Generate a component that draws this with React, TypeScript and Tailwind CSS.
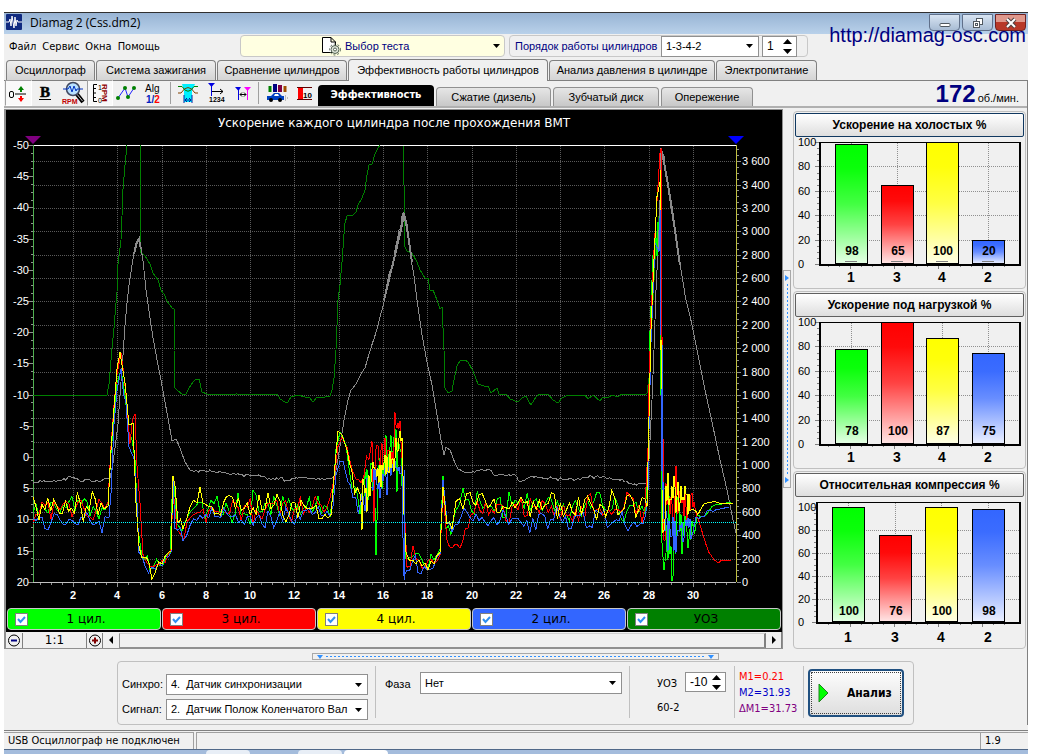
import { useState } from 'react';
import type { ReactNode } from 'react';
import clsx from 'clsx';

type Anchor = [x: number, y: number, amp: number];

type BarData = {
  label: string;
  value: number;
  fill: string;
};

type Series = {
  name: string;
  className: string;
};

const GREEN = '#00ff00';
const RED = '#ff0000';
const YELLOW = '#ffff00';
const BLUE = '#3366ff';

const modeTabs = [
  { title: 'Осциллограф', width: 'w-[89px]' },
  { title: 'Система зажигания', width: 'w-[120px]' },
  { title: 'Сравнение цилиндров', width: 'w-[130px]' },
  { title: 'Эффективность работы цилиндров', width: 'w-[200px]' },
  { title: 'Анализ давления в цилиндре', width: 'w-[166px]' },
  { title: 'Электропитание', width: 'w-[101px]' },
];

const viewTabs = [
  { title: 'Эффективность', width: 'w-[116px]' },
  { title: 'Сжатие (дизель)', width: 'w-[115px]' },
  { title: 'Зубчатый диск', width: 'w-[106px]' },
  { title: 'Опережение', width: 'w-[92px]' },
];

const series: Series[] = [
  { name: '1 цил.', className: 'bg-[#00ff00]' },
  { name: '3 цил.', className: 'bg-[#ff0000]' },
  { name: '4 цил.', className: 'bg-[#ffff00]' },
  { name: '2 цил.', className: 'bg-[#3366ff]' },
  { name: 'УОЗ', className: 'bg-[#008000]' },
];

// Ignition advance
const advanceLine =
  '33,395 107,395 109,384 111,360 112,348 114,328 116,303 117,292 118,264 119,256 121,240 122,216 123,189 125,165 127,145';
const advanceLine2 =
  '140,145 140,252 145,256 150,264 153,273 158,280 161,290 164,294 167,301 172,308 174,309 174,350 175,388 178,391 182,394 186,394 189,388 193,382 196,379 199,379 202,392 207,394 220,395 236,394 270,395 277,394 280,399 285,402 288,402 291,397 298,395 305,397 309,397 313,402 317,397 325,397 330,396 332,390 334,378 336,350 337,326 338,300 340,285 342,262 344,234 345,223 347,216 353,215 356,212 358,205 362,198 365,190 367,175 369,165 372,164 375,154 378,148 380,145';
const advanceLine3 =
  '403,145 404,185 405,247 407,251 412,253 417,262 420,270 425,278 428,278 430,290 433,290 437,300 440,309 442,307 443,328 444,350 445,388 448,393 452,391 454,380 457,366 460,361 465,360 468,362 473,371 478,384 484,386 488,386 491,393 497,388 499,394 507,395 510,399 518,402 522,398 526,396 529,402 531,405 536,397 540,394 548,394 553,400 558,403 562,398 568,395 585,395 588,399 593,395 600,401 603,397 608,398 612,395 618,397 622,394 645,395 647,393 649,378 651,340 654,280 656,240 659,216';

// Crankshaft speed
const speedAnchors: Anchor[] = [
  [33, 483, 1], [40, 481, 1], [62, 481, 1], [70, 477, 1], [77, 480, 1], [100, 482, 1], [104, 479, 0],
  [110, 478, 0], [113, 463, 0], [116, 440, 0], [118, 424, 0], [120, 395, 0], [123, 355, 0], [125, 325, 0],
  [127, 303, 0], [129, 285, 0], [132, 265, 0], [134, 250, 3], [137, 240, 3], [139, 238, 2], [141, 249, 3],
  [143, 262, 2], [146, 290, 0], [150, 318, 0], [153, 338, 0], [158, 365, 0], [161, 380, 0], [164, 397, 0],
  [168, 418, 0], [172, 441, 0], [176, 439, 0], [180, 448, 0], [185, 462, 0], [190, 470, 0], [195, 472, 1],
  [202, 470, 1], [230, 474, 1], [262, 476, 1], [269, 478, 1], [292, 480, 1], [298, 477, 1], [322, 479, 1],
  [332, 478, 0], [335, 475, 0], [337, 465, 0], [341, 440, 0], [344, 420, 0], [348, 400, 0], [351, 390, 0],
  [356, 383, 1], [361, 374, 1], [365, 368, 0], [369, 354, 0], [376, 332, 1], [380, 318, 2], [384, 298, 3],
  [388, 282, 3], [393, 263, 4], [399, 235, 5], [404, 212, 3], [407, 228, 3], [412, 262, 2], [417, 300, 1],
  [422, 335, 0], [427, 362, 0], [432, 385, 0], [437, 415, 0], [441, 440, 0], [444, 455, 0], [446, 447, 0],
  [450, 450, 0], [455, 463, 0], [458, 469, 0], [467, 473, 1], [480, 470, 1], [488, 470, 1], [495, 475, 1],
  [515, 475, 1], [520, 481, 1], [532, 477, 1], [570, 480, 1], [590, 477, 1], [622, 479, 1], [633, 485, 1],
  [646, 483, 0], [648, 478, 0], [650, 440, 0], [652, 400, 0], [654, 350, 0], [656, 290, 0], [658, 250, 0],
  [660, 200, 0], [661, 148, 0], [664, 160, 3], [668, 185, 4], [675, 230, 3], [680, 265, 2], [685, 295, 1],
  [692, 325, 0], [698, 355, 0], [705, 390, 0], [712, 422, 0], [720, 460, 0], [727, 490, 0], [732, 515, 0],
  [736, 533, 0],
];

const greenAnchors: Anchor[] = [
  [33, 506, 8], [105, 506, 8], [108, 502, 4], [111, 455, 2], [114, 415, 2], [117, 385, 3], [121, 369, 2],
  [125, 398, 4], [129, 438, 6], [132, 440, 8], [135, 455, 6], [138, 525, 3], [142, 560, 8], [150, 574, 9],
  [160, 568, 5], [170, 552, 2], [172, 500, 2], [174, 480, 3], [177, 525, 5], [182, 530, 4], [190, 512, 6],
  [196, 505, 9], [262, 508, 9], [330, 506, 9], [333, 490, 3], [336, 450, 3], [340, 433, 2], [346, 450, 4],
  [352, 490, 8], [360, 500, 16], [368, 482, 18], [374, 470, 14], [376, 560, 4], [378, 465, 12], [385, 462, 18],
  [402, 460, 24], [404, 520, 4], [406, 560, 8], [415, 565, 9], [428, 568, 6], [440, 550, 2], [443, 478, 2],
  [446, 525, 4], [451, 530, 4], [456, 505, 5], [463, 498, 7], [480, 500, 8], [500, 508, 9], [645, 506, 9],
  [648, 470, 2], [649, 410, 3], [650, 330, 4], [653, 270, 10], [656, 235, 12], [660, 225, 20], [662, 560, 10],
  [664, 572, 2], [666, 520, 24], [672, 540, 26], [680, 530, 18], [692, 530, 9], [700, 518, 5], [706, 514, 2],
  [712, 507, 1], [722, 504, 0], [731, 502, 0],
];

const redAnchors: Anchor[] = [
  [33, 522, 1], [36, 509, 6], [108, 508, 8], [111, 450, 3], [114, 410, 3], [117, 372, 5], [121, 357, 4],
  [126, 388, 5], [130, 428, 10], [135, 420, 10], [137, 465, 4], [140, 505, 3], [143, 550, 6], [150, 566, 9],
  [162, 563, 4], [171, 549, 1], [173, 490, 3], [177, 525, 5], [184, 535, 6], [190, 515, 5], [200, 510, 8],
  [262, 510, 8], [330, 506, 7], [334, 480, 2], [338, 445, 2], [342, 438, 1], [347, 449, 2], [352, 468, 3],
  [356, 480, 2], [361, 478, 3], [364, 468, 8], [369, 460, 10], [372, 450, 9], [374, 520, 14], [376, 465, 20],
  [382, 460, 14], [394, 450, 16], [396, 418, 11], [401, 430, 11], [404, 500, 3], [407, 560, 9], [416, 560, 9],
  [428, 567, 5], [440, 556, 1], [443, 490, 3], [447, 542, 3], [452, 549, 2], [460, 540, 5], [468, 530, 4],
  [471, 508, 4], [480, 508, 6], [500, 510, 8], [645, 507, 9], [648, 450, 3], [649, 380, 6], [651, 310, 8],
  [654, 250, 10], [658, 195, 9], [660, 155, 5], [661, 148, 1], [662, 340, 3], [664, 540, 18], [667, 500, 18],
  [675, 500, 20], [685, 500, 14], [694, 506, 8], [699, 522, 3], [704, 538, 1], [709, 552, 1], [714, 560, 0],
  [719, 563, 0], [721, 560, 0], [731, 561, 0],
];

const yellowAnchors: Anchor[] = [
  [33, 507, 7], [104, 506, 9], [108, 501, 4], [111, 450, 1], [114, 410, 3], [117, 372, 4], [120, 352, 1],
  [125, 385, 4], [129, 425, 7], [133, 426, 7], [136, 500, 3], [139, 545, 4], [144, 566, 7], [152, 570, 7],
  [162, 563, 5], [171, 550, 1], [173, 480, 3], [175, 490, 3], [178, 522, 4], [183, 528, 4], [190, 512, 4],
  [197, 502, 8], [262, 507, 9], [331, 511, 5], [334, 475, 2], [338, 432, 2], [342, 436, 3], [347, 453, 3],
  [352, 485, 8], [360, 507, 16], [368, 485, 14], [376, 470, 12], [385, 464, 12], [396, 457, 12], [402, 432, 5],
  [404, 515, 3], [406, 555, 8], [416, 562, 8], [428, 568, 6], [440, 551, 2], [443, 485, 2], [447, 520, 4],
  [452, 526, 3], [456, 503, 5], [463, 500, 8], [470, 491, 5], [476, 502, 6], [500, 507, 9], [645, 505, 9],
  [647, 507, 1], [649, 420, 8], [651, 330, 10], [654, 250, 8], [657, 190, 6], [660, 180, 6], [661, 240, 3],
  [663, 530, 12], [666, 500, 20], [671, 490, 18], [679, 496, 14], [690, 506, 8], [698, 512, 2], [704, 504, 2],
  [711, 502, 1], [722, 503, 0], [733, 504, 0],
];

const blueAnchors: Anchor[] = [
  [33, 521, 5], [105, 522, 6], [109, 518, 2], [111, 490, 2], [114, 430, 4], [117, 395, 4], [121, 373, 3],
  [126, 410, 4], [129, 450, 10], [134, 445, 10], [137, 505, 4], [139, 555, 10], [145, 562, 8], [152, 570, 6],
  [162, 564, 4], [171, 553, 1], [173, 476, 3], [175, 525, 5], [183, 541, 5], [190, 527, 3], [197, 515, 5],
  [262, 520, 7], [330, 514, 5], [333, 505, 1], [336, 475, 2], [340, 463, 1], [343, 461, 0], [348, 480, 3],
  [353, 496, 6], [361, 503, 12], [370, 485, 14], [377, 477, 12], [385, 474, 14], [402, 470, 14], [404, 575, 5],
  [407, 560, 10], [418, 568, 8], [430, 568, 5], [440, 555, 1], [443, 482, 2], [447, 525, 5], [452, 530, 3],
  [458, 518, 4], [467, 512, 4], [476, 519, 5], [500, 520, 7], [643, 518, 8], [648, 495, 4], [649, 430, 4],
  [651, 340, 8], [655, 240, 10], [659, 245, 10], [661, 190, 5], [662, 470, 14], [665, 525, 14], [672, 535, 20],
  [682, 530, 12], [693, 524, 10], [702, 515, 5], [710, 511, 2], [720, 509, 0], [729, 507, 0],
];

// Interpolates between anchors and adds repeatable jitter
function trace(anchors: Anchor[], seed: number, step: number) {
  let state = seed;
  const rand = () => {
    state = (state * 1103515245 + 12345) % 2147483648;
    return state / 2147483648;
  };
  const points: string[] = [];
  for (let i = 0; i < anchors.length - 1; i++) {
    const [x0, y0, a0] = anchors[i];
    const [x1, y1, a1] = anchors[i + 1];
    const count = Math.max(1, Math.round((x1 - x0) / (a0 > 10 ? 1 : step)));
    for (let k = 0; k < count; k++) {
      const t = k / count;
      const amp = a0 + (a1 - a0) * t;
      const y = y0 + (y1 - y0) * t + (rand() + rand() - 1) * amp * 2;
      points.push(`${(x0 + (x1 - x0) * t).toFixed(1)},${Math.min(581, Math.max(146, y)).toFixed(1)}`);
    }
  }
  const last = anchors[anchors.length - 1];
  points.push(`${last[0]},${last[1]}`);
  return points.join(' ');
}

const range = (n: number) => Array.from({ length: n }, (_, i) => i);

function WaveChart() {
  const yOf = (v: number) => Math.round(145 + (v + 50) * 6.24);
  const rpmY = (v: number) => Math.round(582 - v * 0.1169);
  const xOf = (v: number) => Math.round(28.8 + v * 22.14);

  return (
    <svg
      viewBox="6 110 776 496"
      className="block w-full h-auto bg-black"
      fontFamily="'Liberation Sans', Arial, sans-serif"
      fontSize="11"
      fill="none"
      role="img"
      aria-label="Ускорение каждого цилиндра после прохождения ВМТ"
    >
      <text x="394" y="127" fill="#fff" fontSize="12" textAnchor="middle" fontFamily="'DejaVu Sans', Verdana, sans-serif">
        Ускорение каждого цилиндра после прохождения ВМТ
      </text>

      <g shapeRendering="crispEdges">
        <g stroke="#5a5a5a" strokeDasharray="1 1">
          {range(18).map((i) => (
            <path key={i} d={`M34 ${rpmY((i + 1) * 200)}.5H736`} />
          ))}
          {range(15).map((i) => (
            <path key={i} d={`M${xOf((i + 1) * 2)}.5 146V582`} />
          ))}
        </g>
        <path d="M33 145.5H736" stroke="#fff" />
        <path d="M33 582.5H736" stroke="#c0c0c0" />
        <path d="M33.5 145V582" stroke="#50b050" />
        <path d="M736.5 145V582" stroke="#c0c040" />
        <g stroke="#909090">
          {range(57).map((i) => (
            <path key={i} d={`M${i % 4 === 0 ? 28 : 31} ${yOf(-50 + i * 1.25)}.5H33`} />
          ))}
          {range(75).map((i) => (
            <path key={i} d={`M737 ${rpmY(i * 50)}.5H${i % 4 === 0 ? 741 : 739}`} />
          ))}
          {range(63).map((i) => (
            <path key={i} d={`M${xOf(0.5 + i * 0.5)}.5 583v${i % 4 === 3 ? 4 : 2}`} />
          ))}
        </g>

        <g stroke="#008000">
          <polyline points={advanceLine} />
          <polyline points={advanceLine2} />
          <polyline points={advanceLine3} />
        </g>
        <polyline points={trace(speedAnchors, 11, 2)} stroke="#8a8a8a" />
        <path d="M134 254l3-12 2-3 2 10M384 300l9-37 7-29 4-20 3 14 5 34M661 150l3 12 4 23 7 45 5 35" stroke="#8a8a8a" strokeWidth="2" />
        <polyline points={trace(greenAnchors, 21, 3)} stroke={GREEN} />
        <polyline points={trace(redAnchors, 35, 3)} stroke={RED} />
        <polyline points={trace(blueAnchors, 59, 3)} stroke={BLUE} />
        <polyline points={trace(yellowAnchors, 47, 3)} stroke={YELLOW} />
        <path d="M660 170V210M660 340V350" stroke={YELLOW} />
        <path d="M661 148V176M661.5 176V340" stroke={RED} />
        <path d="M660.5 210V335M662 345V490M404.500 470V580" stroke={BLUE} />
        <path d="M33 522.5H736" stroke="#00ffff" strokeDasharray="1 1" />
      </g>

      <path d="M25 136H41L33 144Z" fill="#800080" />
      <path d="M728 136H744L736 144Z" fill="#0000ff" />

      <g fill="#fff">
        {range(15).map((i) => (
          <text key={i} x="29" y={yOf(-50 + i * 5) + 4} textAnchor="end">
            {-50 + i * 5}
          </text>
        ))}
        {range(19).map((i) => (
          <text key={i} x="742" y={rpmY(i * 200) + 4}>
            {i * 200 >= 1000 ? `${Math.floor(i / 5)} ${String((i * 200) % 1000).padStart(3, '0')}` : i * 200}
          </text>
        ))}
        {range(15).map((i) => (
          <text key={i} x={xOf((i + 1) * 2)} y="599" textAnchor="middle" fontWeight="bold">
            {(i + 1) * 2}
          </text>
        ))}
      </g>
    </svg>
  );
}

type BarPanelProps = {
  title: string;
  bars: BarData[];
  left?: number;
  zero?: number;
  unit?: number;
  centers: number[];
  focused?: boolean;
};

function BarPanel({ title, bars, left = 24, zero = 127, unit = 1.22, centers, focused }: BarPanelProps) {
  const yOf = (v: number) => Math.round(zero - v * unit);

  return (
    <section className="rounded border border-[#c0c0c0] p-px h-[178px]">
      <button
        type="button"
        className={clsx(
          'block w-full h-6 rounded-xs border bg-linear-to-b from-white to-[#dedede] text-[12px] font-bold',
          focused ? 'border-[#103860]' : 'border-[#606060]',
        )}
      >
        {title}
      </button>
      <svg viewBox="0 0 229 149" className="block w-full h-auto" fontFamily="'Liberation Sans', Arial, sans-serif" fontSize="11">
        <defs>
          {bars.map((bar) => (
            <linearGradient key={bar.label} id={`${bar.fill.slice(1)}-${title.length}`} x1="0" y1="0" x2="0" y2="1">
              <stop offset="0" stopColor={bar.fill} />
              <stop offset="0.2" stopColor={bar.fill} stopOpacity="0.96" />
              <stop offset="0.5" stopColor={bar.fill} stopOpacity="0.74" />
              <stop offset="1" stopColor={bar.fill} stopOpacity="0.1" />
            </linearGradient>
          ))}
        </defs>
        <g shapeRendering="crispEdges" fill="none">
          <g stroke="#909090" strokeDasharray="1 1">
            {[20, 40, 60, 80].map((v) => (
              <path key={v} d={`M${left} ${yOf(v)}.5H225`} />
            ))}
            {centers.map((c) => (
              <path key={c} d={`M${c}.5 6V${zero}`} />
            ))}
          </g>
          <g stroke="#808080">
            {range(21).map((i) => (
              <path key={i} d={`M${i % 4 === 0 ? left - 4 : left - 2} ${yOf(i * 5)}.5H${left}`} />
            ))}
            {range(17).map((i) => (
              <path key={i} d={`M${33 + i * 11}.5 ${zero + 1}v${i % 4 === 2 ? 4 : 2}`} />
            ))}
          </g>
          <path d={`M${left} 5.5H226`} stroke="#000" />
          <path d={`M${left + 1} 5V${zero + 1}M225 5V${zero + 1}M${left} ${zero + 1}H226`} stroke="#000" strokeWidth="2" />
          {bars.map((bar, i) => (
            <g key={bar.label}>
              <rect x={centers[i] - 16} y={yOf(bar.value)} width="33" height={zero - yOf(bar.value)} fill="#fff" />
              <rect
                x={centers[i] - 16 + 0.5}
                y={yOf(bar.value) + 0.5}
                width="32"
                height={zero - yOf(bar.value) - 1}
                fill={`url(#${bar.fill.slice(1)}-${title.length})`}
                stroke="#000"
              />
            </g>
          ))}
        </g>
        <g fill="#000">
          {range(6).map((i) => (
            <text key={i} x="3" y={yOf(i * 20) + 4}>
              {i * 20}
            </text>
          ))}
          {bars.map((bar, i) => (
            <g key={bar.label} fontWeight="bold" textAnchor="middle">
              <text x={centers[i] + 1} y="118" fontSize="12">
                {bar.value}
              </text>
              {focused && <path d={`M${centers[i] - 6} 124.5h12`} stroke="#808080" />}
              <text x={centers[i]} y="145" fontSize="14">
                {bar.label}
              </text>
            </g>
          ))}
        </g>
      </svg>
    </section>
  );
}

const makeBars = (values: number[]): BarData[] => [
  { label: '1', value: values[0], fill: GREEN },
  { label: '3', value: values[1], fill: RED },
  { label: '4', value: values[2], fill: YELLOW },
  { label: '2', value: values[3], fill: BLUE },
];

function DropArrow({ className }: { className?: string }) {
  return (
    <svg viewBox="0 0 7 4" className={clsx('w-[7px] h-1 pointer-events-none', className)} aria-hidden="true">
      <path d="M0 0H7L3.5 4Z" fill="#000" />
    </svg>
  );
}

type ComboProps = {
  id?: string;
  label?: string;
  value: string;
  className: string;
};

function Combo({ id, label, value, className }: ComboProps) {
  return (
    <div className={clsx('grid items-center', className)}>
      <select
        id={id}
        aria-label={label}
        className="col-start-1 row-start-1 appearance-none w-full h-full border border-[#909090] bg-white pl-1 pr-4 text-[11px]"
      >
        <option>{value}</option>
      </select>
      <DropArrow className="col-start-1 row-start-1 justify-self-end mr-[6px]" />
    </div>
  );
}

type SpinnerProps = {
  id?: string;
  label?: string;
  value: string;
  className: string;
};

function Spinner({ id, label, value, className }: SpinnerProps) {
  return (
    <div className={clsx('flex items-center border border-[#909090] bg-white pr-1', className)}>
      <input
        id={id}
        aria-label={label}
        defaultValue={value}
        className="min-w-0 flex-1 pl-1 text-[12px] font-['Liberation_Sans',Arial,sans-serif] outline-none"
      />
      <div className="flex flex-col gap-[5px]">
        <button type="button" aria-label="Больше">
          <svg viewBox="0 0 9 5" className="block w-[9px] h-[5px]">
            <path d="M0 5H9L4.500 0Z" />
          </svg>
        </button>
        <button type="button" aria-label="Меньше">
          <svg viewBox="0 0 9 5" className="block w-[9px] h-[5px]">
            <path d="M0 0H9L4.500 5Z" />
          </svg>
        </button>
      </div>
    </div>
  );
}

type ToolButtonProps = {
  label: string;
  className: string;
  pressed?: boolean;
  children: ReactNode;
};

// Every toolbar icon is drawn on a 24x24 field
function ToolButton({ label, className, pressed, children }: ToolButtonProps) {
  return (
    <button
      type="button"
      aria-label={label}
      aria-pressed={pressed}
      className={clsx('flex items-center justify-center h-[26px]', className, pressed && 'bg-[#f9f9f9] border border-t-[#a0a0a0] border-l-[#a0a0a0] border-b-white border-r-white')}
    >
      <svg viewBox="0 0 24 24" className="w-6 h-6 shrink-0" fill="none">
        {children}
      </svg>
    </button>
  );
}

function Toolbar() {
  return (
    <div className="flex items-center">
      <ToolButton label="Смещение" className="w-[27px]" pressed>
        <rect x="2.500" y="10.500" width="4" height="6" rx="1.500" stroke="#000" />
        <path d="M8 13H19" stroke="#000" />
        <path d="M14 11V7" stroke="#008000" strokeWidth="2" />
        <path d="M11 9H17L14 5Z" fill="#008000" />
        <path d="M14 15V18" stroke="#f00" strokeWidth="2" />
        <path d="M11 17H17L14 21Z" fill="#f00" />
      </ToolButton>
      <ToolButton label="Жирный" className="w-[26px]">
        <text x="12" y="16" fontFamily="'Liberation Serif', serif" fontSize="15" fontWeight="bold" fill="#000" stroke="#000" strokeWidth="0.500" textAnchor="middle">
          B
        </text>
        <path d="M6 18.500H18" stroke="#000" />
      </ToolButton>
      <ToolButton label="Обороты" className="w-[29px]">
        <path d="M15 12L22 21" stroke="#000" strokeWidth="4" />
        <path d="M15 12L21.500 20" stroke="#c0c0c0" />
        <circle cx="12" cy="8" r="6.500" fill="#b8e0ff" stroke="#404860" strokeWidth="1.500" />
        <path d="M2 8H7L9 5L11 11L13 5L15 10L16 8H22" stroke="#0030c0" />
        <text x="1" y="23" fontFamily="'Liberation Sans', sans-serif" fontSize="7" fontWeight="bold" fill="#c00000">
          RPM
        </text>
      </ToolButton>
      <ToolButton label="Шкала" className="w-[26px]" pressed>
        <path d="M9 3.500H5.500V20.500H9M6 7.500H8M6 12H8M6 16.500H8" stroke="#000" />
        <text x="10" y="9" fontFamily="'Liberation Sans', sans-serif" fontSize="7" fill="#000">1</text>
        <text x="10" y="22" fontFamily="'Liberation Sans', sans-serif" fontSize="7" fill="#000">0</text>
        <text transform="translate(14 3) rotate(90)" fontFamily="'Liberation Sans', sans-serif" fontSize="8" fontWeight="bold" fill="#900000">
          RPM
        </text>
      </ToolButton>
      <ToolButton label="Точки" className="w-[25px]">
        <path d="M4 17L11 7L14 16L20 7" stroke="#2020ff" />
        <circle cx="4" cy="17" r="2" fill="#008000" />
        <circle cx="11" cy="7" r="2" fill="#008000" />
        <circle cx="14" cy="16" r="2" fill="#008000" />
        <circle cx="20" cy="7" r="2" fill="#008000" />
      </ToolButton>
      <ToolButton label="Алгоритм" className="w-[30px]">
        <text x="4" y="11" fontFamily="'Liberation Sans', sans-serif" fontSize="10" fill="#000">Alg</text>
        <text x="5" y="22" fontFamily="'Liberation Sans', sans-serif" fontSize="10" fontWeight="bold" fill="#0020c0">
          1/<tspan fill="#f00">2</tspan>
        </text>
      </ToolButton>
      <span className="h-[22px] w-px bg-[#a0a0a0] mx-[2px]" />
      <ToolButton label="Фаза" className="w-[30px]">
        <path d="M6 3H19L16 10V21H8V10Z" fill="#00f0ff" />
        <path d="M2 5.500H6Q12 15 18 5.500H22" stroke="#008000" />
        <path d="M2 12H5Q12 1 19 12H22" stroke="#804000" />
        <path d="M8 14V22M16 14V22M9 19H15M11 17L9 19L11 21M13 17L15 19L13 21" stroke="#0020a0" />
      </ToolButton>
      <ToolButton label="Маркер" className="w-[26px]">
        <path d="M4 2H11L7.500 6Z" fill="#0000e0" />
        <path d="M7.500 2V15" stroke="#0000e0" />
        <path d="M8 10.500H19M16 8L19 10.500L16 13" stroke="#000" />
        <text x="5" y="21" fontFamily="'Liberation Sans', sans-serif" fontSize="7" fontWeight="bold" fill="#000">1234</text>
      </ToolButton>
      <ToolButton label="Интервал" className="w-[28px]">
        <path d="M4 6H10L7.500 10Z" fill="#0000e0" />
        <path d="M7.500 6V19" stroke="#0000e0" />
        <path d="M13 6H20L16.500 10Z" fill="#f0f" />
        <path d="M16.500 6V19" stroke="#f0f" />
        <path d="M9 13.500H15M11 11.500L9 13.500L11 15.500M13 11.500L15 13.500L13 15.500" stroke="#000" />
      </ToolButton>
      <span className="h-[22px] w-px bg-[#a0a0a0] ml-px mr-1" />
      <ToolButton label="Автомобиль" className="w-[27px]">
        <path d="M5 5V11" stroke="#008000" strokeWidth="3" />
        <path d="M10 3V11" stroke="#000080" strokeWidth="4" />
        <path d="M15 4V11" stroke="#800040" strokeWidth="4" />
        <path d="M20 5V11" stroke="#a05000" strokeWidth="3" />
        <path d="M2 15H6L9 12H14L17 15H19V19H2Z" fill="#0040c0" />
        <path d="M9 15L10 13H13L14 15Z" fill="#fff" />
        <circle cx="6" cy="19" r="2" fill="#000" />
        <circle cx="15" cy="19" r="2" fill="#000" />
        <path d="M20 15H22M20 17H23M20 19H22" stroke="#888" strokeDasharray="1 1" />
      </ToolButton>
      <ToolButton label="Уровень" className="w-[28px]">
        <path d="M6 6H11V18H6Z" fill="#f00" />
        <path d="M5 6.500H20M5 18.500H20" stroke="#600000" />
        <text x="11" y="17" fontFamily="'Liberation Sans', sans-serif" fontSize="8" fontWeight="bold" fill="#000">10</text>
      </ToolButton>
    </div>
  );
}

function Legend() {
  const [enabled, setEnabled] = useState<boolean[]>(series.map(() => true));

  return (
    <div className="grid grid-cols-5 gap-px bg-black px-px py-[2px]">
      {series.map((item, i) => (
        <label
          key={item.name}
          className={clsx('flex items-center h-[22px] rounded border border-[#c8c8c8] pl-[7px] pr-4', item.className)}
        >
          <span className="grid">
            <input
              type="checkbox"
              checked={enabled[i]}
              onChange={() => setEnabled(enabled.map((on, k) => (k === i ? !on : on)))}
              className="col-start-1 row-start-1 appearance-none w-[13px] h-[13px] border border-[#808080] bg-white"
            />
            {enabled[i] && (
              <svg viewBox="0 0 13 13" className="col-start-1 row-start-1 w-[13px] h-[13px] pointer-events-none" fill="none">
                <path d="M3 6L5.500 9L10 4" stroke="#3090f0" strokeWidth="2" />
              </svg>
            )}
          </span>
          <span className="flex-1 text-center text-[12px] leading-5 font-['DejaVu_Sans',Verdana,sans-serif]">{item.name}</span>
        </label>
      ))}
    </div>
  );
}

function ScrollRow() {
  return (
    <div className="flex items-center h-4 bg-[#f0f0f0]">
      <button type="button" aria-label="Уменьшить" className="w-[17px] border-r border-[#808080]">
        <svg viewBox="0 0 16 15" className="block w-4 h-[15px]" fill="none">
          <circle cx="8" cy="7.500" r="5.500" stroke="#000" />
          <path d="M5 7.500H11" stroke="#000080" strokeWidth="2" />
        </svg>
      </button>
      <span className="w-[63px] text-center text-[12px] leading-4 font-['DejaVu_Sans',Verdana,sans-serif]">1:1</span>
      <button type="button" aria-label="Увеличить" className="w-[17px] border-x border-[#808080]">
        <svg viewBox="0 0 16 15" className="block w-4 h-[15px]" fill="none">
          <circle cx="8" cy="7.500" r="5.500" stroke="#000" />
          <path d="M5 7.500H11M8 4.500V10.500" stroke="#800000" strokeWidth="2" />
        </svg>
      </button>
      <button type="button" aria-label="Влево" className="flex items-center justify-center w-4 h-4">
        <svg viewBox="0 0 4 8" className="w-1 h-2">
          <path d="M4 0V8L0 4Z" />
        </svg>
      </button>
      <span className="flex-1 h-[15px] border border-r-2 border-t-[#d0d0d0] border-l-[#909090] border-b-[#909090] border-r-[#808080]" />
      <button type="button" aria-label="Вправо" className="flex items-center justify-center w-4 h-4 border-r border-[#808080]">
        <svg viewBox="0 0 4 8" className="w-1 h-2">
          <path d="M0 0V8L4 4Z" />
        </svg>
      </button>
    </div>
  );
}

function TitleBar() {
  const buttonClass =
    'flex items-center justify-center h-[17px] border border-[#60708a] rounded-b-sm bg-linear-to-b from-[#d8e4f2] to-[#a8bcd4]';

  return (
    <header className="relative flex items-start h-[22px] border-t border-[#303030] bg-linear-to-b from-[#98b4d4] to-[#b9d1ea] pl-[2px]">
      <svg viewBox="0 0 16 16" className="w-4 h-4 mt-px" fill="none">
        <rect width="16" height="16" rx="1" fill="#102a80" />
        <path d="M0 8H3L4 5L5 12L6 2L8 14L9 3L10 12L11 6L12 8H16" stroke="#fff" />
      </svg>
      <h1 className="pl-2 text-[12px] leading-5 font-['Open_Sans','Noto_Sans',sans-serif]">Diamag 2 (Css.dm2)</h1>
      <div className="flex gap-[2px] ml-auto mr-[2px] mt-px">
        <button type="button" aria-label="Свернуть" className={clsx(buttonClass, 'w-[31px]')}>
          <svg viewBox="0 0 12 12" className="w-3 h-3">
            <rect x="1" y="6.500" width="10" height="3" rx="1" fill="#fff" stroke="#505860" />
          </svg>
        </button>
        <button type="button" aria-label="Развернуть" className={clsx(buttonClass, 'w-[31px]')}>
          <svg viewBox="0 0 14 12" className="w-[14px] h-3" fill="#fff" stroke="#505860">
            <rect x="5.500" y="1.500" width="6" height="6" />
            <rect x="2.500" y="4.500" width="6" height="6" />
            <rect x="4.500" y="6.500" width="2" height="2" />
          </svg>
        </button>
        <button
          type="button"
          aria-label="Закрыть"
          className="flex items-center justify-center w-[31px] h-[17px] border border-[#702020] rounded-b-sm bg-linear-to-b from-[#e0988c] from-45% to-[#b83828] to-50%"
        >
          <svg viewBox="0 0 12 12" className="w-3 h-3">
            <path d="M2 2L10 10M10 2L2 10" stroke="#504040" strokeWidth="4" />
            <path d="M2 2L10 10M10 2L2 10" stroke="#fff" strokeWidth="2" />
          </svg>
        </button>
      </div>
      <a
        href="http://diamag-osc.com"
        className="absolute right-[2px] top-2 text-[20px] leading-7 text-[#000080] z-10"
      >
        http://diamag-osc.com
      </a>
    </header>
  );
}

function MenuRow() {
  return (
    <div className="flex items-center h-6 pl-[5px]">
      <nav className="flex gap-[6px] w-[231px] pt-[3px] text-[11px] font-['DejaVu_Sans_Condensed','DejaVu_Sans',sans-serif]">
        {['Файл', 'Сервис', 'Окна', 'Помощь'].map((item) => (
          <button type="button" key={item}>
            {item}
          </button>
        ))}
      </nav>
      <button
        type="button"
        className="flex items-center w-[265px] h-[22px] pl-20 pr-1 rounded border border-[#c8c8c8] bg-[#ffffe1] text-[11px] text-[#000080]"
      >
        <svg viewBox="0 0 21 20" className="w-[21px] h-5 mr-[3px]" fill="#fff" stroke="#000">
          <path d="M1.500 1.500H10L14.500 6V16.500H1.500ZM10 1.500V6H14.500" />
          <circle cx="14" cy="13.500" r="4" fill="#dfe5da" stroke="#506050" />
          <circle cx="14" cy="13.500" r="5.500" fill="none" stroke="#506050" strokeDasharray="2 2" />
          <circle cx="14" cy="13.500" r="1.500" stroke="#506050" />
        </svg>
        Выбор теста
        <DropArrow className="ml-auto" />
      </button>
      <div className="flex items-center ml-1 h-[22px] pl-[5px] pr-[10px] rounded border border-[#c8c8c8]">
        <label htmlFor="order" className="w-[146px] text-[11px] text-[#000080] whitespace-nowrap">
          Порядок работы цилиндров
        </label>
        <Combo id="order" value="1-3-4-2" className="w-[98px] h-[21px]" />
        <Spinner label="Номер цилиндра" value="1" className="w-[35px] h-[21px] ml-[3px]" />
      </div>
    </div>
  );
}

function Divider() {
  return <span className="w-px h-[52px] self-start mt-1 bg-[#c0c0c0]" />;
}

function SettingsPanel() {
  return (
    <section className="flex w-[797px] max-w-full h-[64px] mx-auto rounded border border-[#c0c0c0] pl-1 text-[11px] font-['Liberation_Sans',Arial,sans-serif]">
      <div className="grid grid-cols-[44px_202px] content-start items-center gap-y-1 pt-3 pr-[7px]">
        <label htmlFor="sync">Синхро:</label>
        <Combo id="sync" value={'4.\u00a0 Датчик синхронизации'} className="h-[21px]" />
        <label htmlFor="signal">Сигнал:</label>
        <Combo id="signal" value={'2.\u00a0 Датчик Полож Коленчатого Вал'} className="h-[21px]" />
      </div>
      <Divider />
      <div className="flex items-start pt-[10px] pl-[9px] pr-[7px]">
        <label htmlFor="phase" className="w-[35px] leading-6">
          Фаза
        </label>
        <Combo id="phase" value="Нет" className="w-[202px] h-[22px]" />
      </div>
      <Divider />
      <div className="grid grid-cols-[28px_41px] content-start gap-y-1 pt-[10px] pl-[27px] pr-2 font-['DejaVu_Sans_Condensed','DejaVu_Sans',sans-serif]">
        <label htmlFor="uoz" className="leading-6">
          УОЗ
        </label>
        <Spinner id="uoz" value="-10" className="h-5" />
        <span className="leading-4">60-2</span>
      </div>
      <Divider />
      <div className="w-[68px] pt-[7px] pl-1 leading-4 whitespace-nowrap font-['DejaVu_Sans_Condensed','DejaVu_Sans',sans-serif]">
        <p className="text-[#ff0000]">M1=0.21</p>
        <p className="text-[#0000c8]">M2=31.93</p>
        <p className="text-[#800080]">ΔM1=31.73</p>
      </div>
      <Divider />
      <button
        type="button"
        className="flex items-center w-24 h-12 ml-1 mt-[7px] pl-2 rounded-sm border-2 border-[#205080] bg-linear-to-b from-[#fdfdfd] to-[#dedede] outline-1 -outline-offset-4 outline-dotted outline-[#404040] font-bold text-[12px] font-['DejaVu_Sans_Condensed','DejaVu_Sans',sans-serif]"
      >
        <svg viewBox="0 0 11 20" className="w-[11px] h-5 mr-[18px]">
          <path d="M1 1V19L10 10Z" fill="#00ff00" stroke="#208020" />
        </svg>
        Анализ
      </button>
    </section>
  );
}

export default function App() {
  const [mode, setMode] = useState(3);
  const [view, setView] = useState(0);

  return (
    <div className="bg-white pt-3 text-black font-['Liberation_Sans',Arial,sans-serif]">
      <main className="ml-1 mr-3 bg-[#f0f0f0]">
        <TitleBar />
        <MenuRow />

        {/* Mode tabs */}
        <div className="flex items-end gap-px h-[23px] pl-[2px] border-b border-[#808080]">
          {modeTabs.map((tab, i) => (
            <button
              key={tab.title}
              type="button"
              onClick={() => setMode(i)}
              className={clsx(
                'rounded-t border border-b-0 border-[#808080] text-[11px] whitespace-nowrap',
                tab.width,
                mode === i ? 'h-[22px] -mb-px bg-[#f0f0f0]' : 'h-5 bg-linear-to-b from-[#efefef] to-[#d4d4d4]',
              )}
            >
              {tab.title}
            </button>
          ))}
        </div>

        <div className="border-r border-[#808080]">
          {/* Toolbar and view tabs */}
          <div className="flex items-end h-[27px] pl-px border-b-2 border-[#b0b0b0]">
            <Toolbar />
            <div className="flex items-end gap-[2px]">
              {viewTabs.map((tab, i) => (
                <button
                  key={tab.title}
                  type="button"
                  onClick={() => setView(i)}
                  className={clsx(
                    'rounded-t text-[11px] whitespace-nowrap',
                    tab.width,
                    view === i
                      ? "h-[21px] bg-black text-white font-bold font-['DejaVu_Sans_Condensed','DejaVu_Sans',sans-serif]"
                      : 'h-[19px] border border-b-0 border-[#909090] bg-linear-to-b from-[#e6e6e6] to-[#c8c8c8]',
                  )}
                >
                  {tab.title}
                </button>
              ))}
            </div>
            <p className="flex items-baseline gap-[2px] ml-auto mr-2 leading-none text-[11px]">
              <strong className="text-[24px] leading-none text-[#000080]">172</strong>
              об./мин.
            </p>
          </div>

          <div className="flex items-start pt-px">
            <div className="flex-1 min-w-0 border border-l-2 border-[#909090]">
              <WaveChart />
              <Legend />
              <ScrollRow />
            </div>

            <div className="flex flex-col items-center justify-between w-2 h-[218px] mt-[161px] py-1 border border-[#a8a8a8]">
              <svg viewBox="0 0 4 6" className="w-1 h-[6px]">
                <path d="M0 0V6L4 3Z" fill="#3090ff" />
              </svg>
              <svg viewBox="0 0 1 190" className="w-px h-[190px]">
                <path d="M0.500 0V190" stroke="#3090ff" strokeDasharray="2 2" />
              </svg>
              <svg viewBox="0 0 4 6" className="w-1 h-[6px]">
                <path d="M0 0V6L4 3Z" fill="#3090ff" />
              </svg>
            </div>

            <div className="flex flex-col gap-[2px] w-[235px] ml-px px-px pt-[2px]">
              <BarPanel title="Ускорение на холостых %" bars={makeBars([98, 65, 100, 20])} centers={[56, 102, 147, 193]} focused />
              <BarPanel title="Ускорение под нагрузкой %" bars={makeBars([78, 100, 87, 75])} centers={[56, 102, 147, 193]} />
              <BarPanel
                title="Относительная компрессия %"
                bars={makeBars([100, 76, 100, 98])}
                centers={[53, 100, 146, 193]}
                left={21}
                zero={125}
                unit={1.15}
              />
            </div>
          </div>

          <div className="flex items-center justify-between w-[407px] max-w-full h-[7px] mx-auto mt-1 mb-px px-1 border border-[#a8a8a8]">
            <svg viewBox="0 0 6 4" className="w-[6px] h-1">
              <path d="M0 0H6L3 4Z" fill="#3090ff" />
            </svg>
            <svg viewBox="0 0 380 1" className="w-[380px] h-px">
              <path d="M0 0.500H380" stroke="#3090ff" strokeDasharray="2 2" />
            </svg>
            <svg viewBox="0 0 6 4" className="w-[6px] h-1">
              <path d="M0 0H6L3 4Z" fill="#3090ff" />
            </svg>
          </div>

          <SettingsPanel />
        </div>

        <footer className="flex mt-[5px] pt-px border-t border-[#808080] text-[11px] leading-4 font-['DejaVu_Sans_Condensed','DejaVu_Sans',sans-serif]">
          <span className="w-[190px] pl-1 border-t border-r border-[#a0a0a0] whitespace-nowrap">USB Осциллограф не подключен</span>
          <span className="flex-1 ml-[2px] border-t border-l border-[#a0a0a0]" />
          <span className="w-12 pl-1 border-t border-l border-[#a0a0a0]">1.9</span>
        </footer>
      </main>
      <div className="flex h-[5px] ml-1 mr-3 pl-[202px] bg-[#a4bcdc] border-t border-[#506888]">
        <span className="w-11 mr-12 bg-[#e8eef6] rounded-t-sm" />
        <span className="w-11 mr-[2px] bg-[#e8eef6] rounded-t-sm" />
        <span className="w-11 bg-white rounded-t-sm" />
      </div>
    </div>
  );
}
